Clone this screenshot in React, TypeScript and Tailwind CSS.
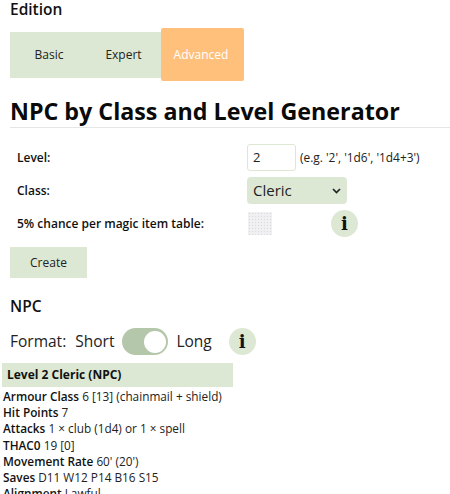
import React from 'react';

const green = 'bg-[#dce8d4]';

const InfoButton = () => (
  <div className={`flex h-[27px] w-[27px] items-center justify-center rounded-full ${green}`}>
    <span className="text-[18px] font-bold leading-none text-[#111] [font-family:'DejaVu_Serif',serif]">i</span>
  </div>
);

const Stat = ({ label, value }: { label: string; value: string }) => (
  <div className="h-[16.2px] whitespace-nowrap leading-[16.2px]">
    <b className="font-semibold text-[#111]">{label}</b> {value}
  </div>
);

export default function App() {
  return (
    <div className="h-[494px] w-[450px] overflow-hidden bg-white text-[#222] [font-family:'Open_Sans','Noto_Sans',sans-serif]">
      <h3 className="ml-[10px] text-[15.5px] font-semibold leading-[18px] text-[#111]">Edition</h3>

      <div className="ml-[10px] mt-[10px] flex h-[53px] items-center text-[12px]">
        <div className={`flex h-[46px] w-[151px] items-center pt-[1px] ${green}`}>
          <span className="w-[76px] pl-[2px] text-center">Basic</span>
          <span className="w-[75px] text-center">Expert</span>
        </div>
        <div className="flex h-[53px] w-[83px] items-center justify-center rounded-[2px] bg-[#ffc07c] pr-[3px] pt-[1px] text-white">Advanced</div>
      </div>

      <h1 className="ml-[10px] mt-[15px] whitespace-nowrap text-[23.25px] font-bold leading-[31px] text-[#0a0a0a]">NPC by Class and Level Generator</h1>
      <div className="ml-[10px] h-px bg-[#e6e6e6]" />

      <div className="mt-[16px] grid grid-cols-[230px_1fr] items-center pl-[17px] text-[12px]">
        <b className="font-semibold text-[#111]">Level:</b>
        <div className="flex items-center">
          <div className="flex h-[27px] w-[49px] items-center rounded-[3px] border border-[#dce8d4] pl-[5px] text-[13px]">2</div>
          <span className="ml-[4px] whitespace-nowrap text-[11.9px]">(e.g. '2', '1d6', '1d4+3')</span>
        </div>

        <b className="mt-[6px] font-semibold text-[#111]">Class:</b>
        <div className={`mt-[6px] flex h-[27px] w-[100px] items-center justify-between rounded-[4px] pl-[6px] pr-[6px] text-[15px] ${green}`}>
          <span>Cleric</span>
          <svg width="9" height="6" viewBox="0 0 9 6" fill="none" stroke="#222" strokeWidth="1.7">
            <path d="M1 1l3.5 3.5L8 1" />
          </svg>
        </div>

        <b className="mt-[6px] whitespace-nowrap font-semibold text-[#111]">5% chance per magic item table:</b>
        <div className="mt-[6px] flex h-[27px] items-center">
          <div className="ml-[1px] h-[23px] w-[24px] bg-[#f0f0f2] bg-[radial-gradient(#d9d9df_1px,transparent_1px)] bg-[length:3px_3px]" />
          <div className="ml-[59px]"><InfoButton /></div>
        </div>
      </div>

      <div className={`ml-[10px] mt-[10px] flex h-[31px] w-[77px] items-center justify-center text-[12px] ${green}`}>Create</div>

      <h3 className="ml-[10px] mt-[19px] text-[15.5px] font-semibold leading-[19px] text-[#111]">NPC</h3>

      <div className="ml-[10px] mt-[12px] flex h-[27px] items-center text-[15.5px] text-[#222]">
        <span>Format:</span>
        <span className="ml-[9px]">Short</span>
        <div className="relative ml-[8px] h-[27px] w-[46px] rounded-full bg-[#b5c7ab]">
          <div className="absolute right-[2px] top-[2.5px] h-[22px] w-[22px] rounded-full bg-white" />
        </div>
        <span className="ml-[8px]">Long</span>
        <div className="ml-[17px]"><InfoButton /></div>
      </div>

      <div className={`ml-[2px] mt-[8px] flex h-[24px] w-[231px] items-center pl-[5px] text-[12px] font-bold text-[#111] ${green}`}>Level 2 Cleric (NPC)</div>

      <div className="ml-[3px] mt-[1px] text-[11.8px]">
        <Stat label="Armour Class" value="6 [13] (chainmail + shield)" />
        <Stat label="Hit Points" value="7" />
        <Stat label="Attacks" value="1 × club (1d4) or 1 × spell" />
        <Stat label="THAC0" value="19 [0]" />
        <Stat label="Movement Rate" value="60' (20')" />
        <Stat label="Saves" value="D11 W12 P14 B16 S15" />
        <Stat label="Alignment" value="Lawful" />
      </div>
    </div>
  );
}
